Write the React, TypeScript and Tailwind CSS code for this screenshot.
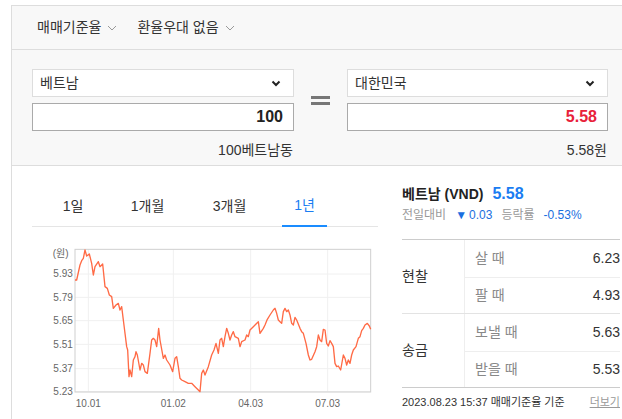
import React from "react";

const FONT = { fontFamily: '"Liberation Sans", "Noto Sans CJK KR", sans-serif' };

// chart points in the chart's own coords (3x scale)
const pts: [number, number][] = [
  [135, 120], [140, 120], [150, 75], [155, 62], [160, 55], [165, 30], [170, 48], [178, 42], [185, 70],
  [190, 105], [195, 80], [205, 65], [210, 80], [218, 72], [225, 140], [232, 145], [238, 165], [245, 170],
  [250, 205], [258, 195], [265, 190], [270, 210], [275, 200], [280, 240], [290, 320], [293, 330], [297, 410],
  [300, 390], [305, 410], [310, 360], [315, 350], [318, 335], [322, 345], [330, 390], [335, 370], [340, 375],
  [345, 395], [352, 400], [360, 340], [365, 300], [370, 295], [375, 300], [380, 320], [386, 265], [390, 300],
  [400, 355], [405, 345], [410, 360], [420, 375], [428, 395], [435, 355], [440, 350], [445, 380], [450, 415],
  [455, 420], [465, 425], [475, 430], [485, 430], [495, 440], [505, 450], [510, 455], [515, 400], [520, 390],
  [525, 405], [535, 380], [545, 345], [552, 330], [558, 310], [565, 340], [570, 300], [575, 295], [580, 320],
  [585, 290], [590, 265], [595, 280], [600, 300], [605, 285], [610, 275], [615, 290], [625, 295], [630, 320],
  [635, 305], [645, 300], [650, 285], [655, 290], [660, 270], [670, 260], [685, 245], [690, 280], [700, 265],
  [705, 255], [712, 238], [720, 225], [730, 210], [735, 205], [740, 220], [745, 240], [750, 245], [755, 250],
  [760, 215], [765, 205], [770, 215], [775, 210], [780, 225], [785, 250], [790, 255], [795, 232], [800, 240],
  [810, 265], [815, 275], [820, 280], [828, 310], [835, 345], [840, 360], [845, 358], [855, 335], [860, 320],
  [865, 285], [870, 300], [875, 305], [880, 268], [885, 270], [890, 310], [895, 318], [900, 302], [905, 310],
  [910, 320], [915, 370], [920, 380], [925, 378], [932, 390], [940, 345], [945, 355], [950, 375], [955, 360],
  [960, 370], [965, 345], [970, 330], [978, 320], [985, 295], [990, 290], [995, 272], [1000, 265], [1005, 255],
  [1012, 250], [1018, 258], [1022, 268],
];

const yTicks = [
  { label: "5.93", y: 102 },
  { label: "5.79", y: 172 },
  { label: "5.65", y: 242 },
  { label: "5.51", y: 313 },
  { label: "5.37", y: 386 },
  { label: "5.23", y: 455 },
];
const xTicks = [
  { label: "10.01", x: 175 },
  { label: "01.02", x: 430 },
  { label: "04.03", x: 662 },
  { label: "07.03", x: 893 },
];

const tabs = [
  { label: "1일", w: "w-[44px]" },
  { label: "1개월", w: "w-[59px]" },
  { label: "3개월", w: "w-[59px]" },
  { label: "1년", w: "w-[45px]", active: true },
];

const Chevron = () => (
  <svg width="10" height="6" viewBox="0 0 10 6" className="ml-[6px]">
    <path d="M1 1l4 4 4-4" fill="none" stroke="#999" strokeWidth="1" />
  </svg>
);

const SelectArrow = () => (
  <svg width="10" height="7" viewBox="0 0 10 7">
    <path d="M1.5 1.5L5 5l3.5-3.5" fill="none" stroke="#222" strokeWidth="2" />
  </svg>
);

const Chart = () => (
  <svg width="346" height="179" viewBox="6 0 1038 537" className="block">
    {yTicks.map((t) => (
      <line key={t.label} x1="135" x2="1022" y1={t.y} y2={t.y} stroke="#f0f0f0" strokeWidth="3" />
    ))}
    {xTicks.map((t) => (
      <line key={t.label} x1={t.x} x2={t.x} y1="28" y2="456" stroke="#f0f0f0" strokeWidth="3" />
    ))}
    <rect x="135" y="28" width="887" height="428" fill="none" stroke="#d0d0d0" strokeWidth="3" />
    <polyline
      points={pts.map((p) => p.join(",")).join(" ")}
      fill="none"
      stroke="#ff6a45"
      strokeWidth="4"
      strokeLinejoin="round"
    />
    <text x="68" y="50" fontSize="30" fill="#666" style={FONT}>(원)</text>
    {yTicks.map((t) => (
      <text key={t.label} x="70" y={t.y + 10} fontSize="30" fill="#666" style={FONT}>
        {t.label}
      </text>
    ))}
    {xTicks.map((t) => (
      <text key={t.label} x={t.x} y="500" fontSize="30" fill="#666" textAnchor="middle" style={FONT}>
        {t.label}
      </text>
    ))}
  </svg>
);

const rows = [
  { group: "현찰", items: [["살 때", "6.23"], ["팔 때", "4.93"]] },
  { group: "송금", items: [["보낼 때", "5.63"], ["받을 때", "5.53"]] },
];

export default function App() {
  return (
    <div className="w-[622px] h-[419px] bg-white pl-[11px] pt-[5px] overflow-hidden" style={FONT}>
      <div className="h-full border-l border-t border-[#dddddd]">
        {/* top filter bar */}
        <div className="h-[44px] bg-[#f8f8f8] border-b border-[#dddddd] flex items-center pl-[25px] text-[14px] text-[#333]">
          <span className="flex items-center">매매기준율<Chevron /></span>
          <span className="flex items-center ml-[20px]">환율우대 없음<Chevron /></span>
        </div>

        {/* converter */}
        <div className="h-[116px] bg-[#f8f8f8] border-b border-[#dddddd] flex pt-[19px] pl-[20px]">
          <div className="w-[262px] flex flex-col">
            <div className="h-[28px] bg-white border border-[#dddddd] flex items-center justify-between pl-[7px] pr-[12px] text-[14px] text-[#333]">
              베트남<SelectArrow />
            </div>
            <div className="h-[28px] mt-[6px] bg-white border border-[#aaaaaa] flex items-center justify-end pr-[10px] text-[16px] font-bold text-[#222]">
              100
            </div>
            <div className="mt-[9px] text-right pr-px text-[14px] text-[#333]">100베트남동</div>
          </div>
          <div className="w-[53px] flex justify-center pt-[27px]">
            <div className="flex flex-col gap-[3px]">
              <div className="w-[19px] h-[3px] bg-[#777]" />
              <div className="w-[19px] h-[3px] bg-[#777]" />
            </div>
          </div>
          <div className="w-[261px] flex flex-col">
            <div className="h-[28px] bg-white border border-[#dddddd] flex items-center justify-between pl-[7px] pr-[12px] text-[14px] text-[#333]">
              대한민국<SelectArrow />
            </div>
            <div className="h-[28px] mt-[6px] bg-white border border-[#aaaaaa] flex items-center justify-end pr-[10px] text-[16px] font-bold text-[#e8213a]">
              5.58
            </div>
            <div className="mt-[9px] text-right pr-px text-[14px] text-[#333]">5.58원</div>
          </div>
        </div>

        {/* lower area */}
        <div className="flex pl-[20px]">
          <div className="w-[346px] flex flex-col">
            <div className="mt-[20px] h-[41px] border-b border-[#e5e5e5] flex gap-[23px] pl-[19px] text-[14px] text-[#333]">
              {tabs.map((t) => (
                <div
                  key={t.label}
                  className={`${t.w} flex items-center justify-center ${t.active ? "text-[#1a7df2] border-b-2 border-[#1a8cff] -mb-px" : ""}`}
                >
                  {t.label}
                </div>
              ))}
            </div>
            <div className="mt-[13px]">
              <Chart />
            </div>
          </div>

          <div className="ml-[24px] w-[218px] flex flex-col">
            <div className="mt-[16px] flex items-baseline">
              <span className="text-[14px] font-bold text-[#222]">베트남 (VND)</span>
              <span className="ml-[9px] text-[16px] font-bold text-[#1a7df2]">5.58</span>
            </div>
            <div className="mt-0 flex items-center text-[12px]">
              <span className="text-[#999]">전일대비</span>
              <span className="ml-[9px] text-[#1a6fe0] text-[12px]">▼</span>
              <span className="ml-[2px] text-[#1a6fe0]">0.03</span>
              <span className="ml-[9px] text-[#999]">등락률</span>
              <span className="ml-[9px] text-[#1a6fe0]">-0.53%</span>
            </div>
            <div className="mt-[15px] border-t border-b border-[#cccccc]">
              {rows.map((r, gi) => (
                <div key={r.group} className={`flex ${gi > 0 ? "border-t border-[#e3e3e3]" : ""}`}>
                  <div className="w-[63px] flex items-center text-[14px] text-[#333] border-r border-[#eeeeee]">
                    {r.group}
                  </div>
                  <div className="flex-1 flex flex-col">
                    {r.items.map(([label, val], i) => (
                      <div
                        key={label}
                        className={`${i > 0 ? "h-[36px] border-t border-[#eeeeee]" : "h-[37px]"} flex items-center justify-between pl-[10px] text-[14px]`}
                      >
                        <span className="text-[#888]">{label}</span>
                        <span className="text-[#333]">{val}</span>
                      </div>
                    ))}
                  </div>
                </div>
              ))}
            </div>
            <div className="mt-[6px] flex justify-between text-[11px] text-[#333]">
              <span>2023.08.23 15:37 매매기준율 기준</span>
              <span className="text-[#999] underline">더보기</span>
            </div>
          </div>
        </div>
      </div>
    </div>
  );
}
